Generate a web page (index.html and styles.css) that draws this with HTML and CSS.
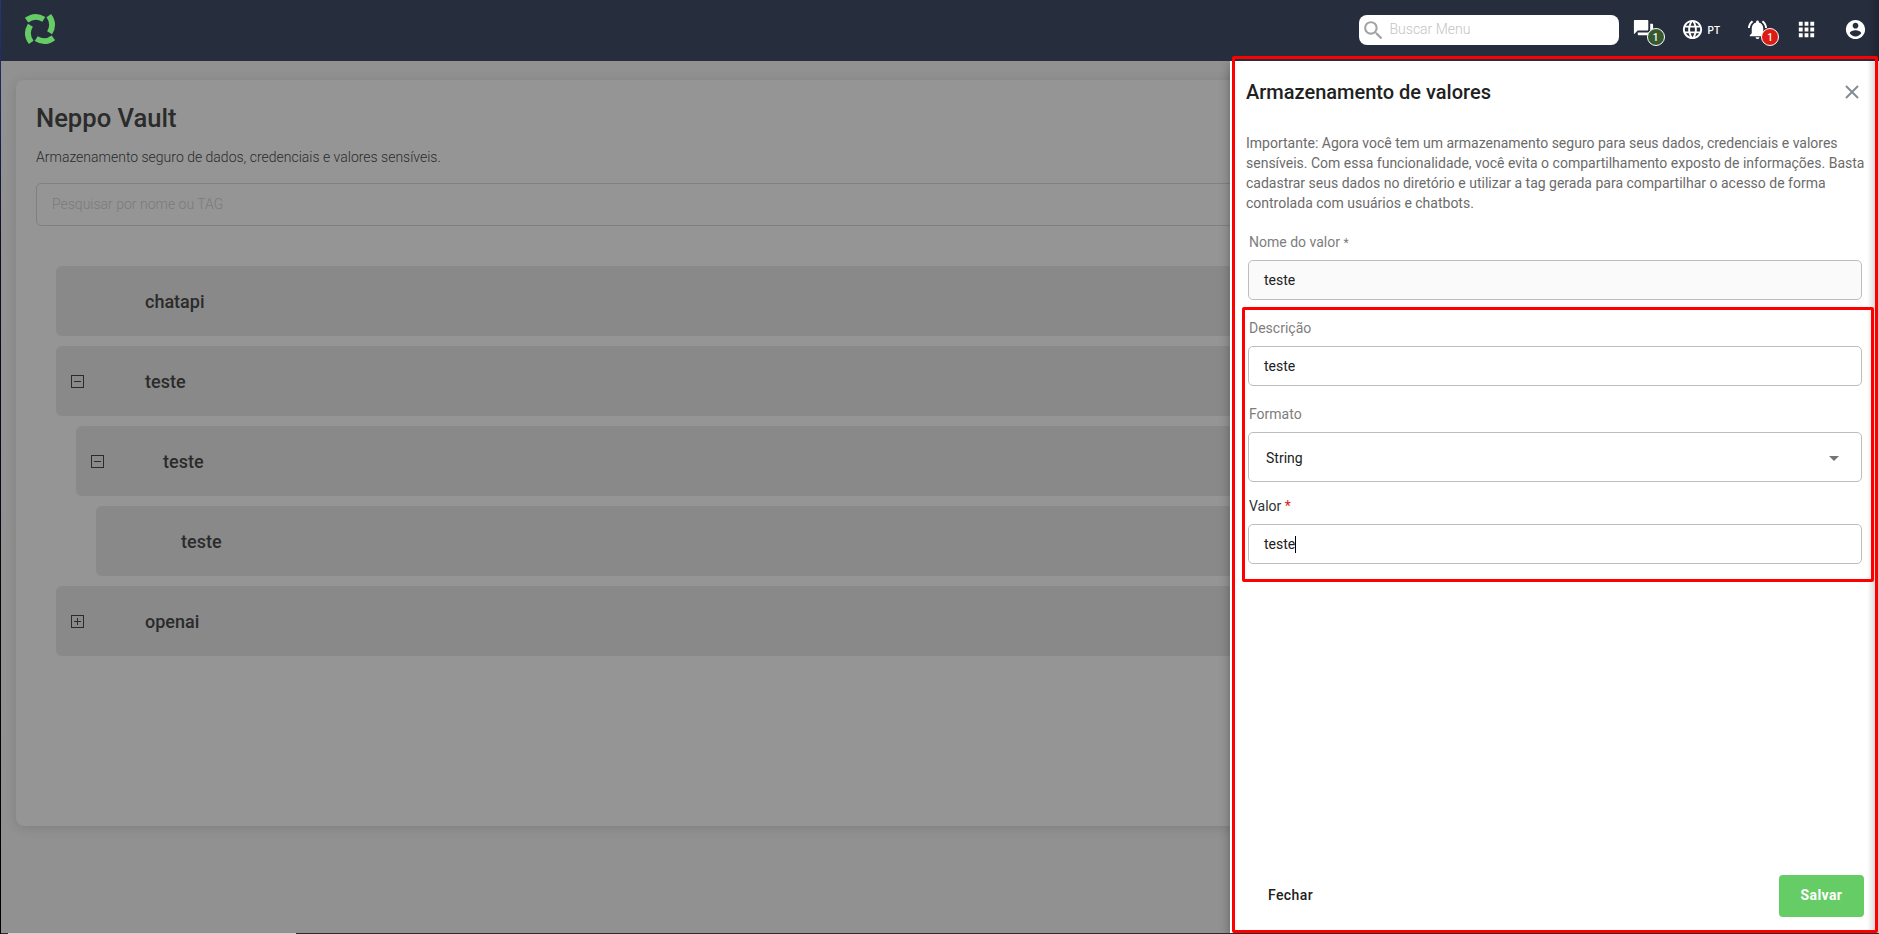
FILE: index.html
```
<!DOCTYPE html>
<html lang="pt">
<head>
    <meta charset="utf-8">
    <title>Neppo Vault</title>
    <link rel="stylesheet" href="styles.css">
</head>
<body>
    <header class="topbar">
        <svg class="logo" viewBox="0 0 32 32">
            <g fill="none" stroke="#66cc66" stroke-width="5.8">
                <path d="M2.6 7.2 Q11 1 19.8 6.4"/>
                <path d="M24.8 2.6 Q31 11 25.6 19.8"/>
                <path d="M29.4 24.8 Q21 31 12.2 25.6"/>
                <path d="M7.2 29.4 Q1 21 6.4 12.2"/>
            </g>
        </svg>
        <div class="search">
            <svg viewBox="0 0 24 24"><path d="M15.5 14h-.79l-.28-.27A6.471 6.471 0 0 0 16 9.5 6.5 6.5 0 1 0 9.5 16c1.61 0 3.09-.59 4.23-1.57l.27.28v.79l5 4.99L20.49 19l-4.99-5zm-6 0C7.01 14 5 11.99 5 9.5S7.01 5 9.5 5 14 7.01 14 9.5 11.99 14 9.5 14z"/></svg>
            <span>Buscar Menu</span>
        </div>
        <div class="icon chat">
            <svg viewBox="0 0 24 24"><path d="M21 6h-2v9H6v2c0 .55.45 1 1 1h11l4 4V7c0-.55-.45-1-1-1zm-4 6V3c0-.55-.45-1-1-1H3c-.55 0-1 .45-1 1v14l4-4h10c.55 0 1-.45 1-1z"/></svg>
            <span class="badge green">1</span>
        </div>
        <div class="icon lang">
            <svg viewBox="0 0 24 24"><path d="M11.99 2C6.47 2 2 6.48 2 12s4.47 10 9.99 10C17.52 22 22 17.52 22 12S17.52 2 11.99 2zm6.93 6h-2.95a15.65 15.65 0 0 0-1.38-3.56A8.03 8.03 0 0 1 18.92 8zM12 4.04c.83 1.2 1.48 2.53 1.91 3.96h-3.82c.43-1.43 1.08-2.76 1.91-3.96zM4.26 14C4.1 13.36 4 12.69 4 12s.1-1.36.26-2h3.38c-.08.66-.14 1.32-.14 2s.06 1.34.14 2H4.26zm.82 2h2.95c.32 1.25.78 2.45 1.38 3.56A7.987 7.987 0 0 1 5.08 16zm2.95-8H5.08a7.987 7.987 0 0 1 4.33-3.56A15.65 15.65 0 0 0 8.03 8zM12 19.96c-.83-1.2-1.48-2.53-1.91-3.96h3.82c-.43 1.43-1.08 2.76-1.91 3.96zM14.34 14H9.66c-.09-.66-.16-1.32-.16-2s.07-1.35.16-2h4.68c.09.65.16 1.32.16 2s-.07 1.34-.16 2zm.25 5.56c.6-1.11 1.06-2.31 1.38-3.56h2.95a8.03 8.03 0 0 1-4.33 3.56zM16.36 14c.08-.66.14-1.32.14-2s-.06-1.34-.14-2h3.38c.16.64.26 1.31.26 2s-.1 1.36-.26 2h-3.38z"/></svg>
            <span>PT</span>
        </div>
        <div class="icon bell">
            <svg viewBox="0 0 24 24"><path d="M7.58 4.08 6.15 2.65C3.75 4.48 2.17 7.3 2.03 10.5h2a8.445 8.445 0 0 1 3.55-6.42zm12.39 6.42h2c-.15-3.2-1.73-6.02-4.12-7.85l-1.42 1.43a8.495 8.495 0 0 1 3.54 6.42zM18 11c0-3.07-1.64-5.64-4.5-6.32V4c0-.83-.67-1.5-1.5-1.5s-1.5.67-1.5 1.5v.68C7.63 5.36 6 7.92 6 11v5l-2 2v1h16v-1l-2-2v-5zm-6 11c.14 0 .27-.01.4-.04.65-.14 1.18-.58 1.44-1.18.1-.24.15-.5.15-.78h-4c.01 1.1.9 2 2.01 2z"/></svg>
            <span class="badge red">1</span>
        </div>
        <div class="icon apps">
            <svg viewBox="0 0 24 24"><path d="M4 8h4V4H4v4zm6 12h4v-4h-4v4zm-6 0h4v-4H4v4zm0-6h4v-4H4v4zm6 0h4v-4h-4v4zm6-10v4h4V4h-4zm-6 4h4V4h-4v4zm6 6h4v-4h-4v4zm0 6h4v-4h-4v4z"/></svg>
        </div>
        <div class="icon account">
            <svg viewBox="0 0 24 24"><path d="M12 2C6.48 2 2 6.48 2 12s4.48 10 10 10 10-4.48 10-10S17.52 2 12 2zm0 3c1.66 0 3 1.34 3 3s-1.34 3-3 3-3-1.34-3-3 1.34-3 3-3zm0 14.2a7.2 7.2 0 0 1-6-3.22c.03-1.99 4-3.08 6-3.08 1.99 0 5.97 1.09 6 3.08a7.2 7.2 0 0 1-6 3.22z"/></svg>
        </div>
    </header>

    <div class="content">
        <main class="page">
            <section class="card">
                <h1>Neppo Vault</h1>
                <p class="subtitle">Armazenamento seguro de dados, credenciais e valores sensíveis.</p>
                <div class="filter">Pesquisar por nome ou TAG</div>
                <div class="tree">
                    <div class="node"><span class="toggle"></span>chatapi</div>
                    <div class="node"><span class="toggle minus"></span>teste</div>
                    <div class="node level1"><span class="toggle minus"></span>teste</div>
                    <div class="node level2"><span class="toggle"></span>teste</div>
                    <div class="node"><span class="toggle plus"></span>openai</div>
                </div>
            </section>
        </main>

        <aside class="panel">
            <div class="panel-head">
                <h2>Armazenamento de valores</h2>
                <svg class="close" viewBox="0 0 14 14"><path d="M1 1 13 13M13 1 1 13"/></svg>
            </div>
            <p class="info">Importante: Agora você tem um armazenamento seguro para seus dados, credenciais e valores sensíveis. Com essa funcionalidade, você evita o compartilhamento exposto de informações. Basta cadastrar seus dados no diretório e utilizar a tag gerada para compartilhar o acesso de forma controlada com usuários e chatbots.</p>
            <div class="form">
                <div class="label">Nome do valor <small>*</small></div>
                <div class="field disabled">teste</div>
                <div class="label">Descrição</div>
                <div class="field">teste</div>
                <div class="label">Formato</div>
                <div class="field select">String <span class="arrow"></span></div>
                <div class="label dark">Valor <span class="required">*</span></div>
                <div class="field">teste<span class="caret"></span></div>
            </div>
            <div class="actions">
                <button class="btn">Fechar</button>
                <button class="btn save">Salvar</button>
            </div>
        </aside>
    </div>

    <footer class="taskbar"><span class="strip"></span></footer>

    <div class="edge-left"></div>
    <div class="edge-right"></div>
    <div class="mark mark-panel"></div>
    <div class="mark mark-fields"></div>
</body>
</html>
```
FILE: styles.css
```
* {
    box-sizing: border-box;
}
body {
    margin: 0;
    height: 934px;
    display: flex;
    flex-direction: column;
    overflow: hidden;
    position: relative;
    font-family: Roboto, sans-serif;
    font-size: 14px;
    background: #919191;
}
h1, h2, p {
    margin: 0;
}

/* Top bar */
.topbar {
    height: 61px;
    flex: none;
    display: flex;
    align-items: center;
    padding: 0 12px 3px 24px;
    background: #262d3d;
}
.logo {
    width: 32px;
    height: 32px;
}
.search {
    display: flex;
    align-items: center;
    width: 260px;
    height: 30px;
    margin: 2px 13px 0 auto;
    padding-left: 2px;
    border-radius: 8px;
    background: #fff;
    color: #c4c4c4;
    font-weight: 300;
}
.search svg {
    width: 25px;
    height: 25px;
    margin-right: 4px;
    fill: #a3a3a3;
}
.search span {
    margin-bottom: 2px;
}
.icon {
    position: relative;
    display: flex;
    align-items: center;
    height: 23px;
}
.icon svg {
    width: 23px;
    height: 23px;
    fill: #fff;
}
.lang {
    margin-left: 26px;
}
.lang span {
    margin: 3px 0 0 4px;
    color: #fff;
    font-size: 10px;
    font-weight: 500;
}
.bell {
    margin-left: 26px;
}
.apps {
    margin-left: 26px;
}
.account {
    margin-left: 26px;
}
.badge {
    position: absolute;
    left: 15px;
    top: 10px;
    width: 18px;
    height: 18px;
    border: 1px solid #fff;
    border-radius: 50%;
    color: #fff;
    font-size: 10px;
    font-weight: 500;
    line-height: 17px;
    text-align: center;
}
.green {
    background: #37592f;
}
.red {
    background: #dc1c13;
}

/* Vault page */
.content {
    flex: 1;
    display: flex;
    min-height: 0;
}
.page {
    flex: none;
    width: 1230px;
    overflow: hidden;
    padding: 19px 0 0 16px;
}
.card {
    width: 1300px;
    height: 746px;
    padding: 24px 20px;
    border-radius: 8px;
    background: #959595;
    box-shadow: 0 2px 12px rgba(0, 0, 0, 0.12);
    color: #2b2b2b;
}
.card h1 {
    font-size: 25.6px;
    font-weight: 500;
    line-height: 28px;
}
.subtitle {
    margin-top: 15px;
    font-weight: 300;
    line-height: 20px;
}
.filter {
    height: 43px;
    margin-top: 16px;
    padding-left: 15px;
    border: 1px solid #808080;
    border-radius: 5px;
    color: #7b7b7b;
    font-weight: 300;
    line-height: 41px;
}
.tree {
    display: flex;
    flex-direction: column;
    gap: 10px;
    margin: 40px 0 0 20px;
}
.node {
    display: flex;
    align-items: center;
    height: 70px;
    padding-left: 15px;
    border-radius: 6px;
    background: #898989;
    font-size: 18px;
    font-weight: 500;
}
.level1 {
    margin-left: 20px;
}
.level2 {
    margin-left: 40px;
}
.toggle {
    display: flex;
    align-items: center;
    justify-content: center;
    width: 13px;
    height: 13px;
    margin-right: 61px;
}
.level1 .toggle {
    margin-right: 59px;
}
.level2 .toggle {
    margin-right: 57px;
}
.minus, .plus {
    border: 1px solid #2b2b2b;
    background: linear-gradient(#2b2b2b, #2b2b2b) center / 7px 1px no-repeat;
}
.plus {
    background: linear-gradient(#2b2b2b, #2b2b2b) center / 7px 1px no-repeat,
        linear-gradient(#2b2b2b, #2b2b2b) center / 1px 7px no-repeat;
}

/* Side panel */
.panel {
    flex: 1;
    min-width: 0;
    display: flex;
    flex-direction: column;
    position: relative;
    padding: 19px 15px 16px 16px;
    background: #fff;
    box-shadow: 0 4px 10px rgba(0, 0, 0, 0.35);
    clip-path: inset(0 0 0 -20px);
}
.panel-head {
    display: flex;
    align-items: center;
    justify-content: space-between;
    height: 24px;
    padding-right: 5px;
}
.panel-head h2 {
    color: #212121;
    font-size: 20px;
    font-weight: 500;
}
.close {
    width: 14px;
    height: 14px;
    stroke: #858b95;
    stroke-width: 2;
}
.info {
    margin-top: 29px;
    width: 622px;
    color: #6b6b6b;
    line-height: 20px;
}
.form {
    padding: 0 2px;
}
.label {
    height: 20px;
    margin: 19px 1px 8px;
    color: #7d7d7d;
    line-height: 20px;
}
.label small {
    font-size: 12px;
}
.dark {
    color: #2d3138;
}
.required {
    color: #dc1c13;
}
.field {
    display: flex;
    align-items: center;
    height: 40px;
    padding-left: 15px;
    border: 1px solid #bdbdbd;
    border-radius: 5px;
    color: #212121;
}
.field + .label {
    margin-top: 18px;
}
.disabled {
    background: #fafafa;
}
.select {
    justify-content: space-between;
    height: 50px;
    padding: 2px 22px 0 17px;
}
.arrow {
    border: 5px solid transparent;
    border-top-color: #757575;
    border-bottom: 0;
}
.select + .label {
    margin-top: 14px;
}
.caret {
    width: 1px;
    height: 17px;
    background: #000;
}
.actions {
    display: flex;
    justify-content: space-between;
    margin-top: auto;
}
.btn {
    height: 42px;
    padding: 0 22px 2px;
    border: 0;
    border-radius: 4px;
    background: none;
    color: #212121;
    font-family: inherit;
    font-size: 14px;
    font-weight: 500;
    letter-spacing: 0.4px;
}
.save {
    width: 85px;
    padding: 0 0 2px;
    background: #66cc66;
    color: #fff;
    font-weight: 700;
}

/* Window edges */
.taskbar {
    flex: none;
    height: 1px;
    background: #2f2b29;
}
.strip {
    display: block;
    width: 288px;
    height: 1px;
    margin-left: 8px;
    background: #d0d0d0;
}
.edge-left {
    position: absolute;
    left: 0;
    top: 0;
    width: 1px;
    height: 934px;
    background: linear-gradient(#28347c, #0d0e20 260px, #000);
}
.edge-right {
    position: absolute;
    right: 0;
    top: 0;
    width: 12px;
    height: 933px;
    background: linear-gradient(to right, transparent, rgba(0, 0, 0, 0.2));
}

/* Highlight frames */
.mark {
    position: absolute;
    border: 3px solid #f00;
    border-radius: 2px;
}
.mark-panel {
    left: 1232px;
    top: 56px;
    width: 646px;
    height: 877px;
}
.mark-fields {
    left: 1242px;
    top: 307px;
    width: 632px;
    height: 275px;
}
```
